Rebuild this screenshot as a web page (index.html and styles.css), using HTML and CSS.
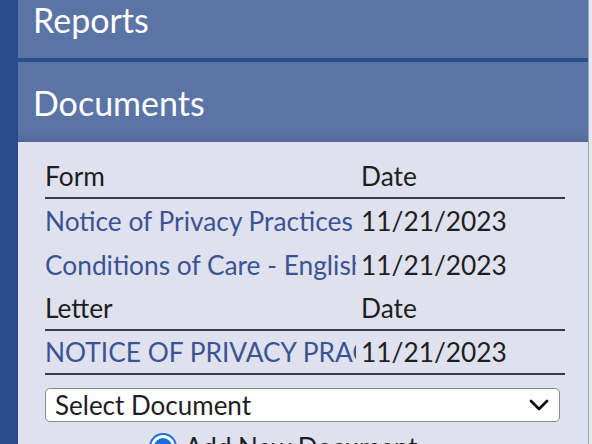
FILE: index.html
```html
<!DOCTYPE html>
<html lang="en">
<head>
<meta charset="utf-8">
<title>Documents</title>
<link rel="stylesheet" href="styles.css">
</head>
<body>
<div class="page">
  <div class="strip"></div>
  <div class="panel">
    <div class="section-head head-reports">Reports</div>
    <div class="section-sep"></div>
    <div class="section-head head-docs">Documents</div>
    <div class="content">
      <div class="doc-table">
        <div class="row head-row">
          <div class="cell name">Form</div>
          <div class="cell date">Date</div>
        </div>
        <div class="row data-row">
          <div class="cell name link">Notice of Privacy Practices</div>
          <div class="cell date">11/21/2023</div>
        </div>
        <div class="row data-row">
          <div class="cell name link">Conditions of Care - English</div>
          <div class="cell date">11/21/2023</div>
        </div>
        <div class="row head-row">
          <div class="cell name">Letter</div>
          <div class="cell date">Date</div>
        </div>
        <div class="row data-row last-row">
          <div class="cell name link">NOTICE OF PRIVACY PRACTICES</div>
          <div class="cell date">11/21/2023</div>
        </div>
      </div>
      <div class="select-box">
        <span class="select-text">Select Document</span>
        <svg class="chevron" width="22" height="14" viewBox="0 0 22 14"><path d="M3 3 L11 11 L19 3" fill="none" stroke="#111" stroke-width="2.8" stroke-linecap="round" stroke-linejoin="round"/></svg>
      </div>
      <div class="radio-row">
        <span class="radio"><span class="radio-dot"></span></span>
        <span class="radio-label">Add New Document</span>
      </div>
    </div>
  </div>
</div>
</body>
</html>
```
FILE: styles.css
```css
html, body {
  margin: 0;
  padding: 0;
  background: #e6e8ef;
  overflow: hidden;
}
.page {
  display: flex;
  width: 592px;
  height: 444px;
  overflow: hidden;
  font-family: Lato, "Open Sans", sans-serif;
}
.strip {
  width: 18px;
  flex: none;
  background: #284b8b;
}
.panel {
  width: 570px;
  flex: none;
  border-right: 1px solid #9aa3b8;
  display: flex;
  flex-direction: column;
}
.section-head {
  flex: none;
  background: #5b74a6;
  color: #ffffff;
  font-size: 34px;
  padding-left: 15px;
  box-sizing: border-box;
}
.head-reports {
  height: 58px;
  line-height: 40px;
}
.section-sep {
  flex: none;
  height: 4px;
  background: #2c4d8b;
}
.head-docs {
  height: 80px;
  line-height: 82px;
  background: linear-gradient(#5b74a6 0, #5b74a6 88%, #53689a 100%);
}
.content {
  flex: none;
  height: 320px;
  background: #dfe2ee;
  padding: 13px 23px 0 27px;
}
.doc-table {
  display: flex;
  flex-direction: column;
}
.row {
  display: grid;
  grid-template-columns: 311px minmax(0, 1fr);
  column-gap: 5px;
  font-size: 26.3px;
  color: #1d1d22;
}
.head-row {
  height: 42px;
  line-height: 42px;
  border-bottom: 2px solid #3a3a40;
}
.data-row {
  height: 44px;
  line-height: 44px;
}
.last-row {
  height: 42px;
  line-height: 42px;
  border-bottom: 2px solid #3a3a40;
}
.cell {
  white-space: nowrap;
  overflow: hidden;
}
.link {
  color: #3b5394;
}
.select-box {
  margin-top: 13px;
  margin-right: 5px;
  height: 34px;
  box-sizing: border-box;
  background: #ffffff;
  border: 1px solid #8a8a8a;
  border-radius: 5px;
  display: flex;
  align-items: center;
  justify-content: space-between;
  padding: 0 9px 0 9px;
  font-size: 26px;
  color: #1d1d22;
}
.chevron {
  display: block;
}
.radio-row {
  display: flex;
  align-items: center;
  margin-top: 9px;
  padding-left: 104px;
  gap: 8px;
  font-size: 26px;
  color: #1d1d22;
}
.radio {
  width: 28px;
  height: 28px;
  border-radius: 50%;
  border: 2px solid #1a6fe0;
  box-sizing: border-box;
  display: flex;
  align-items: center;
  justify-content: center;
  background: #fff;
}
.radio-dot {
  width: 18px;
  height: 18px;
  border-radius: 50%;
  background: #1a6fe0;
}
```
